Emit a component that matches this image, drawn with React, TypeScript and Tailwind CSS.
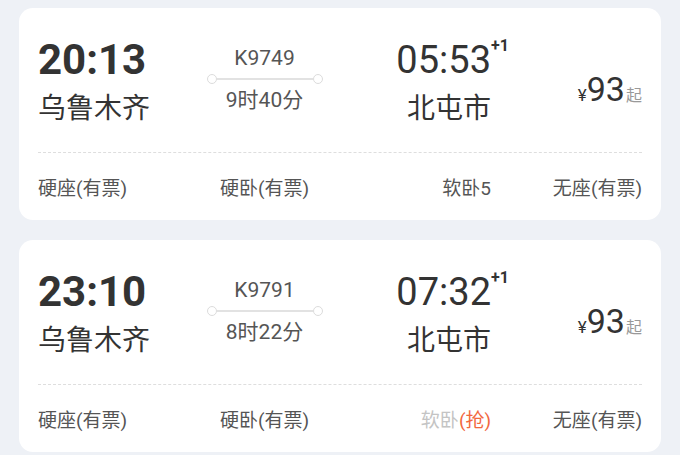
const font = { fontFamily: 'Roboto, "Noto Sans CJK SC", sans-serif' };

type Seat = { name: string; status: string; sold?: boolean };

type Train = {
  dep: string;
  from: string;
  no: string;
  dur: string;
  arr: string;
  to: string;
  price: string;
  seats: Seat[];
};

const trains: Train[] = [
  {
    dep: '20:13',
    from: '乌鲁木齐',
    no: 'K9749',
    dur: '9时40分',
    arr: '05:53',
    to: '北屯市',
    price: '93',
    seats: [
      { name: '硬座', status: '(有票)' },
      { name: '硬卧', status: '(有票)' },
      { name: '软卧', status: '5' },
      { name: '无座', status: '(有票)' },
    ],
  },
  {
    dep: '23:10',
    from: '乌鲁木齐',
    no: 'K9791',
    dur: '8时22分',
    arr: '07:32',
    to: '北屯市',
    price: '93',
    seats: [
      { name: '硬座', status: '(有票)' },
      { name: '硬卧', status: '(有票)' },
      { name: '软卧', status: '(抢)', sold: true },
      { name: '无座', status: '(有票)' },
    ],
  },
];

function SeatCell({ seat, align }: { seat: Seat; align: string }) {
  if (seat.sold) {
    return (
      <div className={align}>
        <span className="text-[#c4c4c4]">{seat.name}</span>
        <span className="text-[#f2683f]">{seat.status}</span>
      </div>
    );
  }
  return (
    <div className={align}>
      {seat.name}
      {seat.status}
    </div>
  );
}

function TrainCard({ t }: { t: Train }) {
  return (
    <div className="bg-white rounded-[14px] px-[19px] pt-[26px] h-[212px]">
      {/* Times & stations */}
      <div className="grid grid-cols-4 h-[118px]">
        <div className="text-[#333]">
          <div className="text-[42px] font-bold leading-[52px]">{t.dep}</div>
          <div className="text-[28px] leading-[40px] mt-[3px]">{t.from}</div>
        </div>
        <div className="flex flex-col items-center text-[#555]">
          <div className="text-[21px] leading-[28px] mt-[10px]">{t.no}</div>
          <div className="flex items-center w-[116px] my-[2px]">
            <span className="w-[10px] h-[10px] rounded-full border-[1.5px] border-[#dcdcdc] bg-white" />
            <span className="flex-1 h-[1.5px] bg-[#e2e2e2]" />
            <span className="w-[10px] h-[10px] rounded-full border-[1.5px] border-[#dcdcdc] bg-white" />
          </div>
          <div className="text-[21px] leading-[28px]">{t.dur}</div>
        </div>
        <div className="flex flex-col items-end text-[#333]">
          <div className="relative text-[38px] leading-[52px]">
            {t.arr}
            <span className="absolute left-full top-[4px] text-[16px] font-bold leading-none">+1</span>
          </div>
          <div className="text-[28px] leading-[40px] mt-[3px]">{t.to}</div>
        </div>
        <div className="flex items-baseline justify-end pt-[38px] text-[#333] leading-none">
          <span className="text-[17px]">¥</span>
          <span className="text-[34px]">{t.price}</span>
          <span className="text-[16px] text-[#999] ml-[1px]">起</span>
        </div>
      </div>
      <div className="border-t border-dashed border-[#dedede]" />
      {/* Seats */}
      <div className="grid grid-cols-4 text-[19px] text-[#555] pt-[22px]">
        <SeatCell seat={t.seats[0]} align="text-left" />
        <SeatCell seat={t.seats[1]} align="text-center" />
        <SeatCell seat={t.seats[2]} align="text-right" />
        <SeatCell seat={t.seats[3]} align="text-right" />
      </div>
    </div>
  );
}

export default function App() {
  return (
    <div style={font} className="min-h-screen bg-[#eef1f6] px-[19px] pt-[8px] flex flex-col gap-[20px]">
      {trains.map((t) => (
        <TrainCard key={t.no} t={t} />
      ))}
    </div>
  );
}
